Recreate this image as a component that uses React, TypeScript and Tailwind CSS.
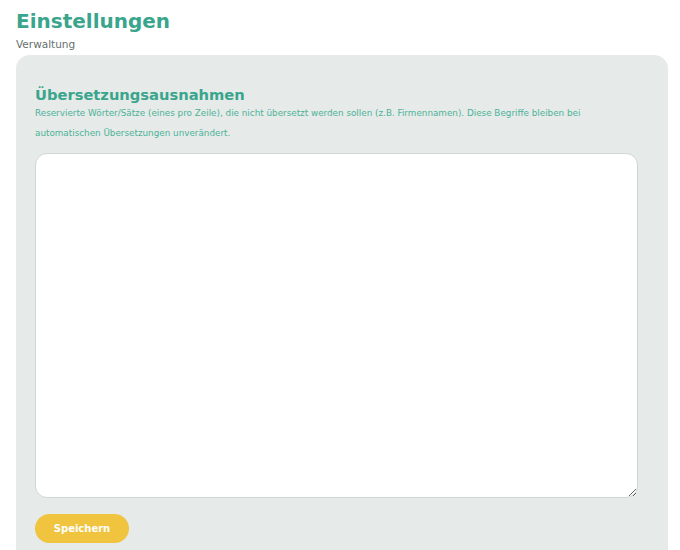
import React from 'react';

const font = { fontFamily: '"DejaVu Sans", "Open Sans", sans-serif' };

const App: React.FC = () => {
  return (
    <div className="min-h-screen bg-white pl-4 pr-3 pt-[6px]" style={font}>
      <h1 className="text-[20px] leading-[30px] font-bold text-[#38a58c]">Einstellungen</h1>
      <p className="text-[10.5px] leading-[14px] text-[#66706d] mt-[1px]">Verwaltung</p>
      <div className="mt-[4px] rounded-t-[14px] bg-[#e6eae8] pl-[19px] pr-[30px] pt-[30px] pb-6">
        <h2 className="text-[14.7px] leading-[20px] font-bold text-[#38a58c]">Übersetzungsausnahmen</h2>
        <p className="-mt-[2px] text-[8.8px] leading-[20px] text-[#4cb399]">
          Reservierte Wörter/Sätze (eines pro Zeile), die nicht übersetzt werden sollen (z.B. Firmennamen). Diese Begriffe bleiben bei automatischen Übersetzungen unverändert.
        </p>
        <textarea className="mt-[10px] block w-full h-[345px] rounded-[12px] border border-[#cfd6d4] bg-white outline-none" />
        <button className="mt-4 h-[29px] w-[94px] rounded-full bg-[#f0c43f] text-white text-[10px] font-bold">
          Speichern
        </button>
      </div>
    </div>
  );
};

export default App;
